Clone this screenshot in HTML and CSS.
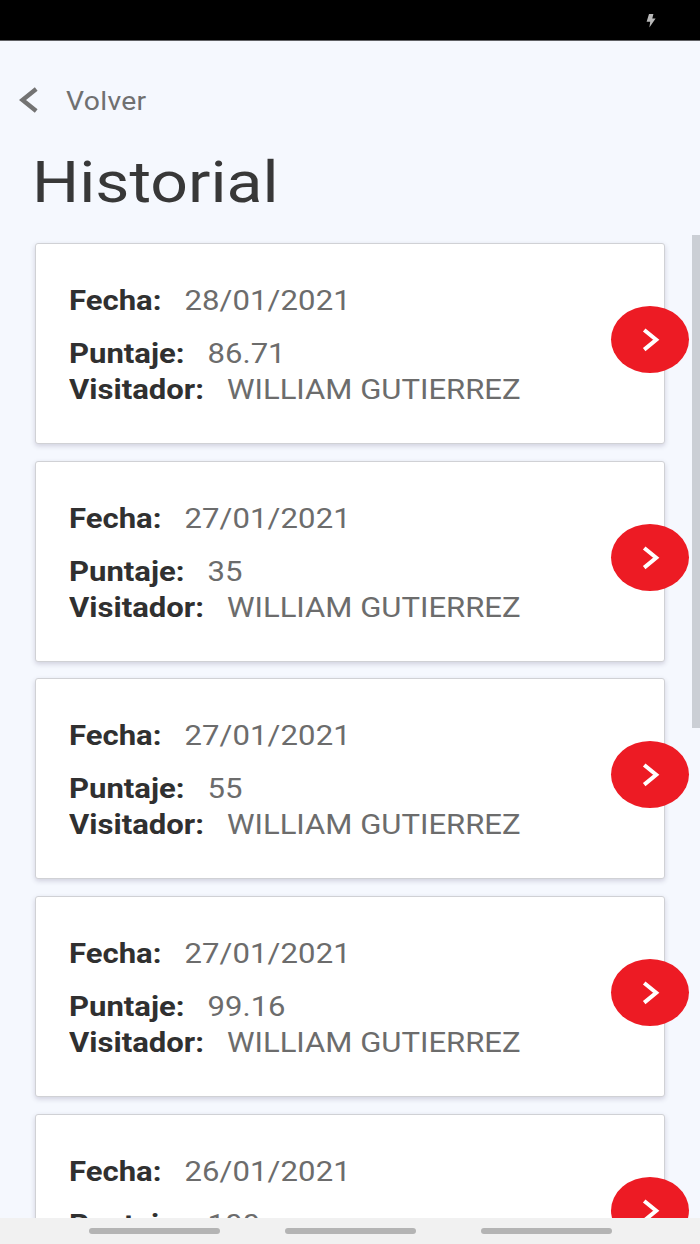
FILE: index.html
```html
<!DOCTYPE html>
<html lang="es">
<head>
<meta charset="utf-8">
<title>Historial</title>
<link rel="stylesheet" href="styles.css">
</head>
<body>
<div class="screen">
  <header class="status"><svg class="bolt" viewBox="0 0 10 14"><path d="M3 0H7.4L6.3 4.4H9.6L3.4 13.5L4.2 7.8H.6Z"/></svg></header>
  <main class="content">
    <nav class="back"><svg class="back-icon" viewBox="0 0 20 26"><path d="M17.2 2L3.5 13L17.2 24"/></svg><span class="back-label">Volver</span></nav>
    <h1 class="title">Historial</h1>
    <section class="list">
      <article class="card">
        <p class="row date"><b>Fecha:</b><span>28/01/2021</span></p>
        <p class="row"><b>Puntaje:</b><span>86.71</span></p>
        <p class="row"><b>Visitador:</b><span>WILLIAM GUTIERREZ</span></p>
        <a class="go"><svg viewBox="0 0 78 67"><path d="M33.2 24L45.2 33.8L33.2 43.6"/></svg></a>
      </article>
      <article class="card">
        <p class="row date"><b>Fecha:</b><span>27/01/2021</span></p>
        <p class="row"><b>Puntaje:</b><span>35</span></p>
        <p class="row"><b>Visitador:</b><span>WILLIAM GUTIERREZ</span></p>
        <a class="go"><svg viewBox="0 0 78 67"><path d="M33.2 24L45.2 33.8L33.2 43.6"/></svg></a>
      </article>
      <article class="card">
        <p class="row date"><b>Fecha:</b><span>27/01/2021</span></p>
        <p class="row"><b>Puntaje:</b><span>55</span></p>
        <p class="row"><b>Visitador:</b><span>WILLIAM GUTIERREZ</span></p>
        <a class="go"><svg viewBox="0 0 78 67"><path d="M33.2 24L45.2 33.8L33.2 43.6"/></svg></a>
      </article>
      <article class="card">
        <p class="row date"><b>Fecha:</b><span>27/01/2021</span></p>
        <p class="row"><b>Puntaje:</b><span>99.16</span></p>
        <p class="row"><b>Visitador:</b><span>WILLIAM GUTIERREZ</span></p>
        <a class="go"><svg viewBox="0 0 78 67"><path d="M33.2 24L45.2 33.8L33.2 43.6"/></svg></a>
      </article>
      <article class="card">
        <p class="row date"><b>Fecha:</b><span>26/01/2021</span></p>
        <p class="row"><b>Puntaje:</b><span>100</span></p>
        <a class="go"><svg viewBox="0 0 78 67"><path d="M33.2 24L45.2 33.8L33.2 43.6"/></svg></a>
      </article>
    </section>
    <div class="scrollbar"></div>
  </main>
  <footer class="navbar"><i></i><i></i><i></i></footer>
</div>
</body>
</html>
```

FILE: styles.css
```css
* { box-sizing: border-box; }
body { margin: 0; font-family: Roboto, sans-serif; }
.screen { width: 700px; height: 1244px; display: flex; flex-direction: column; overflow: hidden; }
.status { height: 41px; flex: none; background: #000; border-bottom: 1px solid #606164; display: flex; justify-content: flex-end; padding: 14px 44px 0 0; }
.bolt { width: 10px; height: 14px; fill: #b8b8b8; }
.content { position: relative; height: 1177px; flex: none; overflow: hidden; background: #f5f8fe; padding: 43px 0 0; }
.back { display: flex; align-items: center; height: 34px; padding-left: 19px; }
.back-icon { width: 20px; height: 26px; margin-top: -2px; fill: none; stroke: #737373; stroke-width: 4.4; }
.back-label { margin-left: 27px; font-size: 25.5px; line-height: 34px; letter-spacing: .3px; color: #707070; transform: scaleX(1.11); transform-origin: left; }
.title { margin: 30px 0 0 31.5px; width: 300px; height: 70px; font-size: 57.5px; line-height: 70px; font-weight: 400; color: #383838; transform: scaleX(1.15); transform-origin: left; }
.list { display: flex; flex-direction: column; gap: 16.7px; margin: 25px 35px 0; }
.card { position: relative; height: 201px; flex: none; padding: 39px 0 0 33px; background: #fff; border: 1px solid #d0d1d5; border-radius: 3px; box-shadow: 0 2px 5px rgba(60, 50, 90, .2); }
.row { display: flex; gap: 20px; width: 450px; height: 36px; margin: 0; font-size: 27px; line-height: 36px; color: #6c6c6c; white-space: nowrap; transform: scaleX(1.15); transform-origin: left; }
.row b { font-weight: 700; color: #303030; }
.date { margin-bottom: 17px; }
.date span { letter-spacing: .1px; }
.go { position: absolute; top: 62px; right: -25px; width: 78px; height: 67px; border-radius: 50%; background: #ed1b24; }
.go svg { display: block; width: 78px; height: 67px; fill: none; stroke: #fff; stroke-width: 4; }
.scrollbar { position: absolute; top: 194px; right: 0; width: 8px; height: 493px; background: #cbcfd5; }
.navbar { height: 26px; flex: none; display: flex; gap: 65px; padding: 10px 0 0 88.5px; background: #f1f1f1; }
.navbar i { width: 131px; height: 6px; border-radius: 3px; background: #b4b4b4; }
```
